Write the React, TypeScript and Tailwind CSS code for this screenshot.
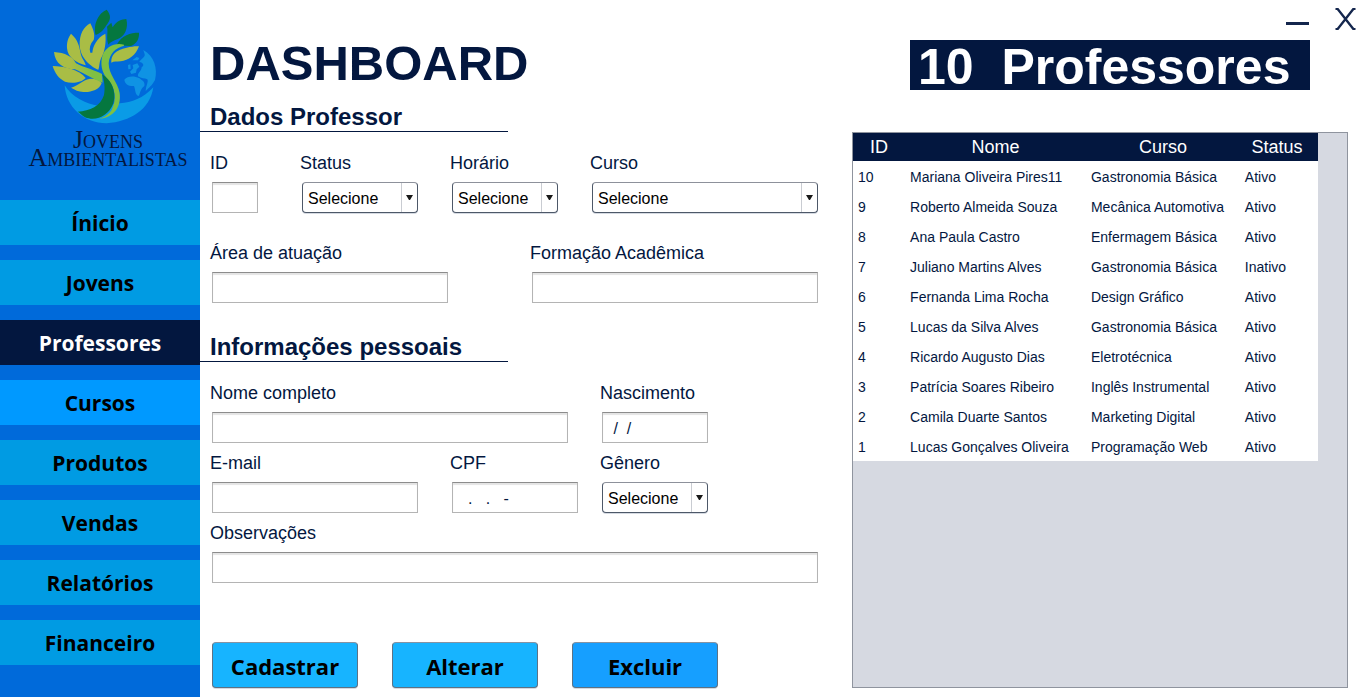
import { useId, type ReactNode } from "react";

const menu = ["Ínicio", "Jovens", "Professores", "Cursos", "Produtos", "Vendas", "Relatórios", "Financeiro"];

const teachers = [
  [10, "Mariana Oliveira Pires11", "Gastronomia Básica", "Ativo"],
  [9, "Roberto Almeida Souza", "Mecânica Automotiva", "Ativo"],
  [8, "Ana Paula Castro", "Enfermagem Básica", "Ativo"],
  [7, "Juliano Martins Alves", "Gastronomia Básica", "Inativo"],
  [6, "Fernanda Lima Rocha", "Design Gráfico", "Ativo"],
  [5, "Lucas da Silva Alves", "Gastronomia Básica", "Ativo"],
  [4, "Ricardo Augusto Dias", "Eletrotécnica", "Ativo"],
  [3, "Patrícia Soares Ribeiro", "Inglês Instrumental", "Ativo"],
  [2, "Camila Duarte Santos", "Marketing Digital", "Ativo"],
  [1, "Lucas Gonçalves Oliveira", "Programação Web", "Ativo"],
];

function Logo() {
  return (
    <div className="flex h-[200px] flex-col items-center pt-[7px] pl-4">
      <svg viewBox="150 21 330 360" className="mr-1.5 h-[120px] w-[110px] shrink-0" aria-hidden="true">
        <defs>
          <linearGradient id="branch" x1="0" x2="1">
            <stop offset="0.35" stopColor="#a9bd45" />
            <stop offset="0.8" stopColor="#7fc043" />
          </linearGradient>
        </defs>
        <path fill="#0a9be6" d="M194 256C198 320 250 370 320 370C390 365 450 330 460 262C430 295 395 308 360 310L300 318C255 312 215 290 194 256Z" />
        <g fill="#0f93e4">
          <path d="M430 150C462 168 474 205 465 240C455 258 448 262 437 273C438 256 446 246 442 238C434 234 424 236 414 229C412 219 424 214 425 202C434 196 430 188 418 186C424 176 436 172 434 163Z" />
          <path d="M373 239C383 226 405 228 417 234C427 241 436 246 433 258C420 268 421 280 416 288C405 285 407 270 402 258C385 259 375 252 373 239Z" />
          <path d="M390 215L400 205L398 195L412 190L418 200L410 208L408 218L394 222Z" />
          <path d="M397 181L410 171L418 174L414 181ZM384 195L391 193L392 207L385 208Z" />
        </g>
        <g fill="#05773f">
          <path d="M287 105C278 70 298 38 320 29C334 46 332 58 322 72C312 84 312 94 287 105Z" />
          <path d="M325 134C318 112 325 98 321 80L334 68L338 82C350 62 365 58 379 57C386 85 374 110 352 118C340 122 332 126 325 134Z" />
          <path d="M350 134C366 105 390 98 417 98C418 116 410 130 395 137C380 140 366 133 350 134Z" />
        </g>
        <g fill="#a9bd45">
          <path d="M271 70C280 88 286 105 281 120C270 132 267 145 271 158L277 158C279 138 290 114 316 101C319 125 315 155 303 175C297 188 299 200 295 209C275 202 240 175 239 135C238 105 250 80 271 70Z" />
          <path d="M213 101C235 120 238 140 243 165C247 178 256 186 257 196C230 190 203 172 201 145C200 125 205 112 213 101Z" />
          <path d="M158 198C190 198 238 208 257 234C245 248 215 252 195 245C175 235 165 220 158 198Z" />
          <path d="M213 263C238 255 245 241 270 236C287 236 300 240 305 250C298 270 270 278 250 276C235 275 225 270 213 263Z" />
          <path d="M334 188C332 165 347 150 380 143C395 140 405 138 417 139C408 165 385 182 362 184C350 185 342 184 334 188Z" />
        </g>
        <path fill="url(#branch)" d="M162 156C195 158 218 170 228 190C250 202 290 212 306 222L308 248C270 234 248 217 225 208C190 207 165 190 162 156Z" />
        <path fill="#7fc043" d="M372 134C342 127 318 142 308 165C300 190 305 215 320 235C348 262 350 300 335 330C325 345 312 352 298 357C342 352 364 322 359 280C353 245 326 225 326 190C328 160 348 143 372 137Z" />
        <path fill="#05773f" d="M306 223C336 240 352 280 338 315C325 345 290 366 255 352C245 346 240 338 233 335C270 333 302 318 312 285C316 265 313 240 306 223Z" />
      </svg>
      <p className="mt-1 text-center font-['Liberation_Serif',serif] text-[26px] leading-[18px] text-[#03173f] [font-variant-caps:small-caps]">
        Jovens
        <br />
        Ambientalistas
      </p>
    </div>
  );
}

function Field({ label, className, children }: { label: string; className?: string; children: (id: string) => ReactNode }) {
  const id = useId();
  return (
    <div className={className}>
      <label htmlFor={id} className="mb-1.5 block text-lg leading-[26px] whitespace-nowrap">
        {label}
      </label>
      <div className="ml-0.5">{children(id)}</div>
    </div>
  );
}

function TextField({ label, className, value = "" }: { label: string; className?: string; value?: string }) {
  return (
    <Field label={label} className={className}>
      {(id) => (
        <input
          id={id}
          type="text"
          defaultValue={value}
          className="block h-[31px] w-full border border-[#b4b4b4] border-t-[#8c8c8c] bg-white px-1.5 pt-0.5 text-base whitespace-pre shadow-[inset_0_2px_1px_#e4e4e4] outline-none"
        />
      )}
    </Field>
  );
}

function SelectField({ label, className }: { label: string; className?: string }) {
  return (
    <Field label={label} className={className}>
      {(id) => (
        <div className="relative">
          <select
            id={id}
            className="block h-[31px] w-full appearance-none rounded-[4px] border border-[#4d5868] border-t-[#8d919b] bg-white pt-0.5 pr-4 pl-[5px] text-base text-black shadow-[0_1px_0_#d5dae2] outline-none"
          >
            <option>Selecione</option>
          </select>
          <span className="pointer-events-none absolute inset-y-px right-0 flex w-[17px] items-center border-l border-[#c9ccd2] pl-1">
            <svg viewBox="0 0 7 5" className="h-[5px] w-[7px]" aria-hidden="true">
              <path d="M0 0H7L4 5H3Z" fill="#1a1a1a" />
            </svg>
          </span>
        </div>
      )}
    </Field>
  );
}

function SectionTitle({ children }: { children: ReactNode }) {
  return (
    <h2 className="h-[30px] w-[308px] border-b border-[#03173f] pl-2.5 text-2xl leading-[30px] font-bold">{children}</h2>
  );
}

function ActionButton({ children, danger = false }: { children: ReactNode; danger?: boolean }) {
  const fill = danger ? "bg-[#169fff]" : "bg-[#17b4ff]";
  return (
    <button
      type="button"
      className={`h-[46px] w-[146px] rounded-[4px] border border-[#5d7285] border-t-[#8593a3] pt-0.5 font-['Open_Sans',sans-serif] text-[22px] leading-none font-bold text-black shadow-[0_1px_0_#d5dae2] ${fill}`}
    >
      {children}
    </button>
  );
}

function menuColor(item: string) {
  if (item === "Professores") return "bg-[#03173f] text-white";
  if (item === "Cursos") return "bg-[#0099ff] text-black";
  return "bg-[#009be3] text-black";
}

export default function App() {
  return (
    <div className="flex min-h-screen bg-white font-['Liberation_Sans',Arial,sans-serif] text-[#03173f]">
      <aside className="w-[200px] shrink-0 bg-[#006ada]">
        <Logo />
        <nav className="flex flex-col gap-[15px]">
          {menu.map((item) => (
            <button
              key={item}
              type="button"
              className={`h-[45px] w-full pt-0.5 font-['Open_Sans',sans-serif] text-[21px] leading-none font-bold ${menuColor(item)}`}
            >
              {item}
            </button>
          ))}
        </nav>
      </aside>

      <main className="grid flex-1 grid-cols-[652fr_505fr] pb-[9px]">
        <form className="pt-[38px] pr-[34px]">
          <h1 className="pl-2.5 text-[49px] leading-[50px] font-bold">DASHBOARD</h1>

          <section className="mt-3.5">
            <SectionTitle>Dados Professor</SectionTitle>
            <div className="mt-[18px] flex pl-2.5">
              <TextField label="ID" className="mr-[42px] w-12" />
              <SelectField label="Status" className="mr-8 w-[118px]" />
              <SelectField label="Horário" className="mr-8 w-[108px]" />
              <SelectField label="Curso" className="flex-1" />
            </div>
            <div className="mt-[27px] flex gap-[82px] pl-2.5">
              <TextField label="Área de atuação" className="w-[238px]" />
              <TextField label="Formação Acadêmica" className="flex-1" />
            </div>
          </section>

          <section className="mt-[29px]">
            <SectionTitle>Informações pessoais</SectionTitle>
            <div className="mt-[18px] flex flex-col gap-[7px] pl-2.5">
              <div className="flex gap-8 pr-[110px]">
                <TextField label="Nome completo" className="flex-1" />
                <TextField label="Nascimento" className="w-[108px]" value=" /  /" />
              </div>
              <div className="flex pr-[110px]">
                <TextField label="E-mail" className="mr-8 flex-1" />
                <TextField label="CPF" className="mr-[22px] w-32" value="  .   .   -" />
                <SelectField label="Gênero" className="w-[108px]" />
              </div>
              <TextField label="Observações" />
            </div>
          </section>

          <div className="mt-[59px] flex gap-[34px] pl-3">
            <ActionButton>Cadastrar</ActionButton>
            <ActionButton>Alterar</ActionButton>
            <ActionButton danger>Excluir</ActionButton>
          </div>
        </form>

        <section className="flex flex-col">
          <div className="flex h-10 items-start justify-end gap-[26px] pt-2 pr-px">
            <button type="button" aria-label="Minimizar" className="flex h-[17px] w-[23px] items-end">
              <span className="h-[3px] w-full bg-[#14264d]" />
            </button>
            <button type="button" aria-label="Fechar" className="h-[22px] w-[21px]">
              <svg viewBox="0 0 21 22" className="h-[22px] w-[21px]" aria-hidden="true">
                <path d="M.5 .8H2.5L18.5 21.2H20.5M20.5 .8H18.5L2.5 21.2H.5" stroke="#14264d" strokeWidth="2.4" fill="none" />
              </svg>
            </button>
          </div>
          <p className="mr-[47px] ml-[58px] h-[50px] bg-[#03173f] pl-2 text-[50px] leading-[54px] font-bold whitespace-pre text-white">
            {"10  Professores"}
          </p>
          <div className="mt-[42px] mr-[9px] flex-1 border border-[#8f949e] bg-[#d6d9e1] pr-[29px]">
            <table className="w-full table-fixed border-collapse bg-white text-left">
              <colgroup>
                <col className="w-[11.2%]" />
                <col className="w-[38.9%]" />
                <col className="w-[33.1%]" />
                <col />
              </colgroup>
              <thead className="bg-[#03173f] text-lg leading-7 text-white">
                <tr className="h-7">
                  {["ID", "Nome", "Curso", "Status"].map((title) => (
                    <th key={title} scope="col" className="p-0 text-center font-normal last:pr-1">
                      {title}
                    </th>
                  ))}
                </tr>
              </thead>
              <tbody className="text-sm">
                {teachers.map((row) => (
                  <tr key={row[0]} className="h-[30px]">
                    {row.map((cell, i) => (
                      <td key={i} className="pt-0.5 pr-0 pb-0 pl-[5px] whitespace-nowrap">
                        {cell}
                      </td>
                    ))}
                  </tr>
                ))}
              </tbody>
            </table>
          </div>
        </section>
      </main>
    </div>
  );
}
